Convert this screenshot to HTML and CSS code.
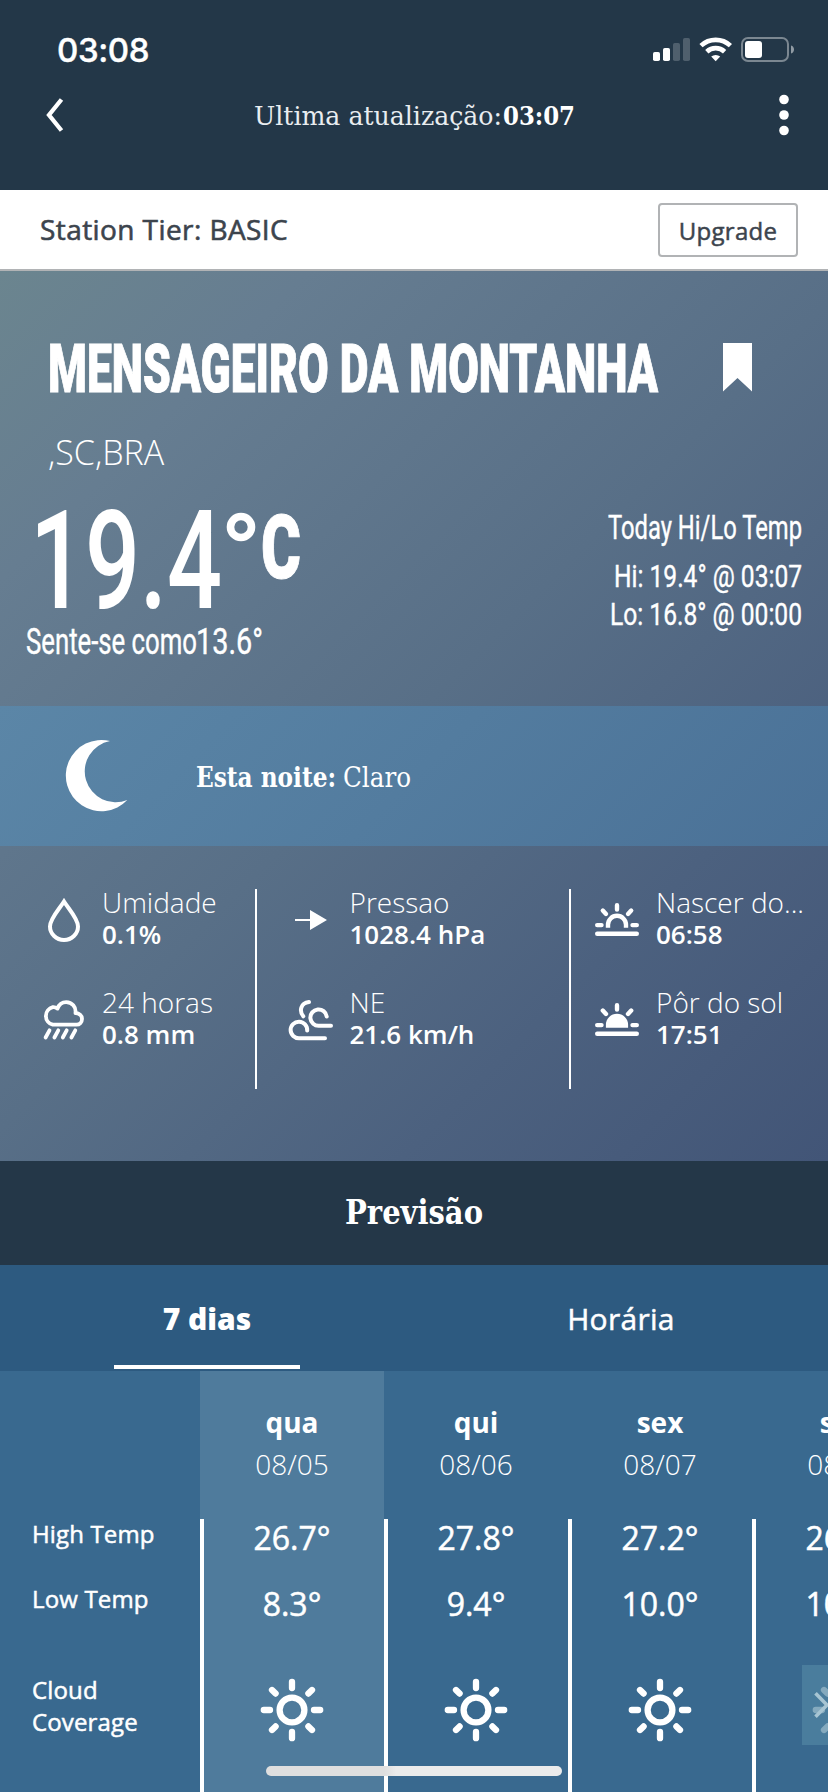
FILE: index.html
```html
<!DOCTYPE html>
<html lang="pt">
<head>
<meta charset="utf-8">
<title>Mensageiro da Montanha</title>
<link rel="stylesheet" href="styles.css">
</head>
<body>
<svg width="0" height="0" class="defs" aria-hidden="true">
  <symbol id="sun" viewBox="0 0 64 64">
    <g fill="none" stroke="#fff" stroke-width="6.3" stroke-linecap="round">
      <circle cx="32" cy="32" r="12.4"/>
      <path d="M32 3.8V10M32 54v6.2M3.8 32H10M54 32h6.2M12 12l3.6 3.6M48.4 48.4L52 52M12 52l3.6-3.6M48.4 15.6L52 12"/>
    </g>
  </symbol>
</svg>
<div class="screen">
  <header class="top">
    <div class="status">
      <span class="clock">03:08</span>
      <svg class="indicators" width="142" height="26" viewBox="0 0 142 26">
        <g fill="#fff">
          <rect x="0" y="16" width="7" height="9" rx="1.8"/>
          <rect x="10" y="12" width="7" height="13" rx="1.8"/>
          <g opacity=".2"><rect x="20" y="7" width="7" height="18" rx="1.8"/><rect x="30" y="2" width="7" height="23" rx="1.8"/></g>
          <path d="M58.200 20.600A7 7 0 0 1 67.200 20.600L62.700 25.300z"/>
        </g>
        <g fill="none" stroke="#fff" stroke-width="4.700">
          <path d="M48 9.600A21.500 21.500 0 0 1 77.400 9.600"/>
          <path d="M53.800 15.700A13 13 0 0 1 71.600 15.700"/>
        </g>
        <rect x="89" y="2" width="46" height="23" rx="6" fill="none" stroke="#fff" stroke-opacity=".4" stroke-width="2"/>
        <rect x="92" y="5" width="17" height="17" rx="3" fill="#fff"/>
        <path d="M138 9.500c4 1 4 7 0 8z" fill="#fff" fill-opacity=".5"/>
      </svg>
    </div>
    <nav class="nav">
      <svg width="18" height="34" viewBox="0 0 18 34"><path d="M15.500 1.500L3 17l12.500 15.500" fill="none" stroke="#fff" stroke-width="4.300"/></svg>
      <svg class="serif nav-title" width="320" height="36" viewBox="0 0 320 36">
        <text class="updated" x="0" y="28" textLength="248" lengthAdjust="spacingAndGlyphs">Ultima atualização:</text>
        <text class="updated-time" x="249" y="28" textLength="72" lengthAdjust="spacingAndGlyphs">03:07</text>
      </svg>
      <svg width="10" height="42" viewBox="0 0 10 42"><g fill="#fff"><circle cx="5" cy="5.500" r="4.800"/><circle cx="5" cy="21" r="4.800"/><circle cx="5" cy="36.500" r="4.800"/></g></svg>
    </nav>
  </header>

  <section class="tier">
    <span class="tier-name">Station Tier: BASIC</span>
    <button class="upgrade">Upgrade</button>
  </section>

  <section class="hero">
    <div class="summary">
      <div class="title-row">
        <svg class="condensed" width="609" height="50" viewBox="0 0 609 50"><text class="station" x="-1" y="49" textLength="610" lengthAdjust="spacingAndGlyphs">MENSAGEIRO DA MONTANHA</text></svg>
        <svg width="29" height="49" viewBox="0 0 29 49"><path d="M0 0h29v48.500L14.500 35 0 48.500z" fill="#fff"/></svg>
      </div>
      <p class="place">,SC,BRA</p>
      <div class="temps">
        <div class="now">
          <svg class="condensed" width="270" height="104" viewBox="0 0 270 104">
            <text class="reading" x="-2" y="101" textLength="192" lengthAdjust="spacingAndGlyphs">19.4</text>
            <circle class="degree" cx="209" cy="20" r="10.500"/>
            <text class="unit" x="229" y="71" textLength="40" lengthAdjust="spacingAndGlyphs">C</text>
          </svg>
          <svg class="condensed feels" width="240" height="40" viewBox="0 0 240 40">
            <text class="feels-text" x="0" y="30" textLength="171" lengthAdjust="spacingAndGlyphs">Sente-se como</text>
            <text class="feels-text" x="170" y="30" textLength="67" lengthAdjust="spacingAndGlyphs">13.6°</text>
          </svg>
        </div>
        <svg class="condensed hilo" width="200" height="130" viewBox="0 0 200 130">
          <text class="hilo-title" x="6" y="32" textLength="194" lengthAdjust="spacingAndGlyphs">Today Hi/Lo Temp</text>
          <text class="hilo-line" x="12" y="79.500" textLength="188" lengthAdjust="spacingAndGlyphs">Hi: 19.4° @ 03:07</text>
          <text class="hilo-line" x="8" y="117.500" textLength="192" lengthAdjust="spacingAndGlyphs">Lo: 16.8° @ 00:00</text>
        </svg>
      </div>
    </div>

    <div class="tonight">
      <svg width="63" height="72" viewBox="0 0 63 72"><path d="M45 1A35.600 35.600 0 1 0 62.300 60A30.900 30.900 0 1 1 45 1z" fill="#fff"/></svg>
      <svg class="serif" width="216" height="36" viewBox="0 0 216 36">
        <text class="night-label" x="0" y="29" textLength="140" lengthAdjust="spacingAndGlyphs">Esta noite:</text>
        <text class="night-value" x="147" y="29" textLength="68" lengthAdjust="spacingAndGlyphs">Claro</text>
      </svg>
    </div>

    <div class="metrics">
      <div class="metric-col">
        <div class="metric">
          <span class="icon"><svg width="32" height="44" viewBox="0 0 32 44"><path d="M16 3.500C11 11.500 2 20.500 2 28.500a14 13.500 0 0 0 28 0C30 20.500 21 11.500 16 3.500z" fill="none" stroke="#fff" stroke-width="4"/></svg></span>
          <div class="texts"><p class="label">Umidade</p><p class="value">0.1%</p></div>
        </div>
        <div class="metric">
          <span class="icon"><svg width="44" height="41" viewBox="0 0 44 41"><g fill="none" stroke="#fff" stroke-width="3.800" stroke-linecap="round" stroke-linejoin="round"><path d="M10.800 24.700A9 9 0 0 1 10.800 7.200C12.500 7 14 7.600 15.500 8.600C17 4.500 20.500 2.200 24.200 2.200C30 2.200 34.300 7 33.500 13C37.500 13.300 40 16 40 19C40 22.300 37.500 24.700 34.500 24.700z"/><path d="M7.500 30.300L3.600 37.500M16.300 30.300l-3.900 7.200M24.700 30.300l-3.900 7.200M33.300 30.300l-3.900 7.200"/></g></svg></span>
          <div class="texts"><p class="label">24 horas</p><p class="value">0.8 mm</p></div>
        </div>
      </div>
      <div class="metric-col">
        <div class="metric">
          <span class="icon"><svg width="32" height="20" viewBox="0 0 32 20"><path d="M0 9h15V0l17 10-17 10v-9H0z" fill="#fff"/></svg></span>
          <div class="texts"><p class="label">Pressao</p><p class="value">1028.4 hPa</p></div>
        </div>
        <div class="metric">
          <span class="icon"><svg width="44" height="41" viewBox="0 0 44 41"><g fill="none" stroke="#fff" stroke-width="4" stroke-linecap="round"><path d="M20 2C11.500 3 10 11 14.300 16.300"/><path d="M37.700 16.500A8.200 8.200 0 1 0 30 25.800H42"/><path d="M18.200 30.500A8.300 8.300 0 1 0 10.300 38.300H36"/></g></svg></span>
          <div class="texts"><p class="label">NE</p><p class="value">21.6 km/h</p></div>
        </div>
      </div>
      <div class="metric-col">
        <div class="metric">
          <span class="icon"><svg width="44" height="34" viewBox="0 0 44 34"><g fill="none" stroke="#fff" stroke-width="4.400"><path d="M13 24.700V21.800A9 9 0 0 1 31 21.800V24.700"/><path stroke-linecap="round" d="M2.200 30.800H41.800M2.200 22.100H6.500M37.500 22.100H41.800M22 2.200V6.500M7.800 7.600L11 11M36.200 7.600L33 11"/></g></svg></span>
          <div class="texts"><p class="label">Nascer do...</p><p class="value">06:58</p></div>
        </div>
        <div class="metric">
          <span class="icon"><svg width="44" height="34" viewBox="0 0 44 34"><g fill="none" stroke="#fff" stroke-width="4.400"><path fill="#fff" stroke="none" d="M10.900 24.700V21.800A11.100 11.100 0 0 1 33.100 21.800V24.700z"/><path stroke-linecap="round" d="M2.200 30.800H41.800M2.200 22.100H6.500M37.500 22.100H41.800M22 2.200V6.500M7.800 7.600L11 11M36.200 7.600L33 11"/></g></svg></span>
          <div class="texts"><p class="label">Pôr do sol</p><p class="value">17:51</p></div>
        </div>
      </div>
    </div>
  </section>

  <h2 class="forecast-head">
    <svg class="serif" width="138" height="40" viewBox="0 0 138 40"><text class="forecast-title" x="0" y="32" textLength="138" lengthAdjust="spacingAndGlyphs">Previsão</text></svg>
  </h2>
  <div class="tabs">
    <div class="tab active"><span>7 dias</span></div>
    <div class="tab"><span>Horária</span></div>
  </div>

  <section class="forecast">
    <div class="row-labels">
      <span class="row-label">High Temp</span>
      <span class="row-label">Low Temp</span>
      <span class="row-label cloud">Cloud Coverage</span>
    </div>
    <div class="days">
      <div class="day today"><div class="day-head"><b>qua</b><span>08/05</span></div><div class="day-body"><span>26.7°</span><span>8.3°</span><svg width="64" height="64"><use href="#sun"/></svg></div></div>
      <div class="day"><div class="day-head"><b>qui</b><span>08/06</span></div><div class="day-body"><span>27.8°</span><span>9.4°</span><svg width="64" height="64"><use href="#sun"/></svg></div></div>
      <div class="day"><div class="day-head"><b>sex</b><span>08/07</span></div><div class="day-body"><span>27.2°</span><span>10.0°</span><svg width="64" height="64"><use href="#sun"/></svg></div></div>
      <div class="day"><div class="day-head"><b>sáb</b><span>08/08</span></div><div class="day-body"><span>26.1°</span><span>10.6°</span><svg width="64" height="64"><use href="#sun"/></svg></div></div>
    </div>
    <div class="scroll-next"><svg width="26" height="80" viewBox="0 0 26 80"><path d="M13.500 28.300L25 40 13.500 51.700" fill="none" stroke="#a7c5d3" stroke-width="3.600"/></svg></div>
  </section>
  <div class="home-bar"></div>
</div>
</body>
</html>
```
FILE: styles.css
```css
* { box-sizing: border-box; }
body { margin: 0; font-family: "Open Sans", sans-serif; color: #fff; }
p, h2 { margin: 0; font-weight: 400; }
svg { display: block; flex: none; overflow: visible; }
.defs { position: absolute; }
.screen { position: relative; display: flex; flex-direction: column; width: 828px; height: 1792px; overflow: hidden; background: #39698f; }
.serif { font-family: "DejaVu Serif Condensed", "DejaVu Serif", serif; fill: #fff; }
.condensed { font-family: Roboto, sans-serif; fill: #fff; }

.top { flex: none; height: 190px; padding-top: 30px; background: #233748; }
.status { display: flex; justify-content: space-between; height: 40px; padding: 0 33px 0 57px; }
.clock { font: 500 33px/40px Inter, sans-serif; letter-spacing: -.4px; -webkit-text-stroke: .4px #fff; }
.indicators { margin-top: 6px; }
.nav { display: flex; align-items: center; justify-content: space-between; height: 90px; padding: 0 39px 0 46px; }
.nav-title { margin-right: 16px; }
.updated { font-size: 26px; fill: #e9edf0; }
.updated-time { font-size: 26px; font-weight: 700; }

.tier { flex: none; display: flex; align-items: center; justify-content: space-between; height: 81px; padding: 0 30px 0 40px; background: #fff; border-bottom: 2px solid #b1b3b5; color: #3c444d; }
.tier-name { padding-bottom: 2px; font-size: 28px; letter-spacing: .42px; -webkit-text-stroke: .6px #3c444d; }
.upgrade { width: 140px; height: 54px; padding: 2px 0 0; border: 2px solid #b1b3b5; border-radius: 4px; background: #fff; font: 400 24px "Open Sans", sans-serif; letter-spacing: .3px; -webkit-text-stroke: .5px #3c444d; color: #3c444d; }

.hero { flex: none; height: 890px; background: linear-gradient(135deg, #6b858f 0%, #667d91 18%, #586f87 50%, #4c617f 75%, #425577 100%); }
.summary { height: 435px; padding: 72px 26px 0; }
.title-row { display: flex; align-items: flex-start; justify-content: space-between; padding: 0 50px 0 23px; }
.station { font-size: 67px; font-weight: 900; stroke: #fff; stroke-width: 1px; }
.place { margin-top: 25px; padding-left: 22px; font-size: 34px; font-weight: 300; line-height: 68px; }
.temps { display: flex; justify-content: space-between; height: 150px; margin-top: 50px; }
.now { margin-top: -29px; padding-left: 6px; }
.reading { font-size: 137px; font-weight: 500; }
.degree { fill: none; stroke: #fff; stroke-width: 7.6; }
.unit { font-size: 89px; font-weight: 900; stroke: #fff; stroke-width: 1px; }
.feels { margin: 13px 0 0 -6px; }
.feels-text { font-size: 36px; stroke: #fff; stroke-width: .4px; }
.hilo { margin-top: -29px; }
.hilo-title { font-size: 34px; stroke: #fff; stroke-width: .4px; }
.hilo-line { font-size: 32px; stroke: #fff; stroke-width: .4px; }

.tonight { display: flex; align-items: center; gap: 68px; height: 140px; padding-left: 65px; background: linear-gradient(135deg, #5b86a7, #537c9f 50%, #4a7197); }
.night-label { font-size: 27px; font-weight: 700; }
.night-value { font-size: 27px; }

.metrics { display: grid; grid-template-columns: 257px 314px 257px; margin-top: 43px; height: 200px; }
.metric-col { border-right: 2px solid #fff; }
.metric-col:last-child { border-right: 0; }
.metric { display: flex; align-items: flex-start; height: 100px; white-space: nowrap; }
.icon { flex: none; display: flex; align-items: center; justify-content: center; width: 78px; height: 62px; margin-left: 25px; }
.metric-col:nth-child(2) .icon { width: 79px; margin-left: 14.5px; }
.metric-col:nth-child(3) .icon { width: 78px; margin-left: 7px; }
.texts { margin: -1px 0 0 -1px; }
.metric-col:nth-child(3) .texts { margin-left: 0; }
.label { font-size: 28px; font-weight: 300; line-height: 28px; }
.value { font-size: 26px; font-weight: 600; line-height: 37px; }

.forecast-head { flex: none; display: flex; align-items: center; justify-content: center; height: 104px; padding-bottom: 2px; background: #243748; }
.forecast-title { font-size: 33px; font-weight: 700; }
.tabs { flex: none; display: flex; height: 106px; background: #2d5a80; }
.tab { display: flex; flex: 1; justify-content: center; font-size: 30px; line-height: 108px; letter-spacing: .3px; -webkit-text-stroke: .5px #fff; }
.tab.active { font-weight: 800; letter-spacing: 0; -webkit-text-stroke: 0; }
.tab.active span { box-sizing: content-box; width: 186px; height: 100px; text-align: center; border-bottom: 4px solid #fff; }

.forecast { position: relative; flex: 1; display: flex; overflow: hidden; }
.row-labels { flex: none; display: flex; flex-direction: column; width: 200px; padding: 147px 40px 0 32px; font-size: 24px; line-height: 32px; letter-spacing: .15px; -webkit-text-stroke: .5px #fff; }
.row-label { height: 65px; }
.row-label.cloud { padding-top: 26px; height: auto; }
.days { display: flex; }
.day { flex: none; width: 184px; text-align: center; }
.today { background: #4f7b9c; }
.day-head { display: flex; flex-direction: column; height: 148px; padding-top: 30px; font-size: 28px; line-height: 42px; }
.day-head span { font-weight: 300; }
.day-body { display: flex; flex-direction: column; align-items: center; height: 273px; padding-right: 4px; border-left: 4px solid #fff; font-size: 32px; -webkit-text-stroke: .5px #fff; }
.day-body span:first-child { height: 52px; line-height: 38px; }
.day-body span:nth-child(2) { height: 107px; line-height: 66px; }
.scroll-next { position: absolute; top: 294px; right: 0; width: 26px; height: 80px; background: rgba(81, 134, 162, .7); }
.home-bar { position: absolute; left: 266px; top: 1766px; width: 296px; height: 10px; border-radius: 5px; background: linear-gradient(90deg, #dfdfdf 40%, #ebebeb 44%); }
```
